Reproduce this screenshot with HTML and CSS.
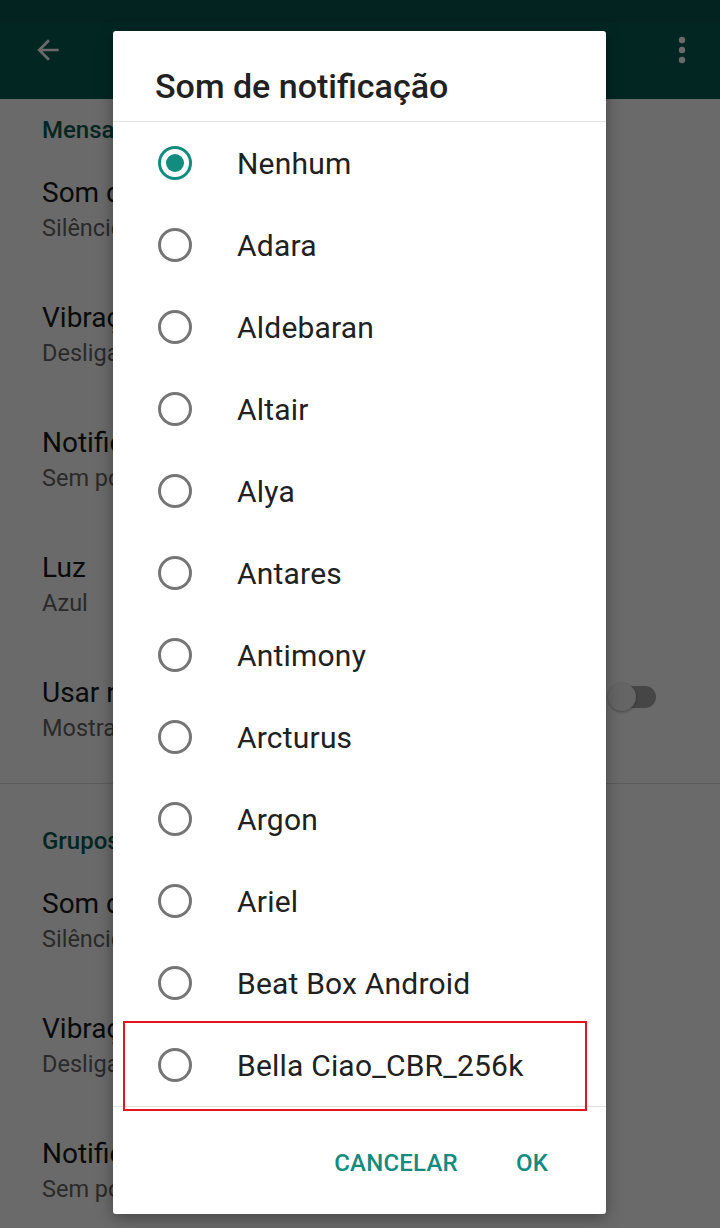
FILE: index.html
```html
<!DOCTYPE html>
<html lang="pt">
<head>
<meta charset="utf-8">
<link rel="stylesheet" href="styles.css">
</head>
<body>
<div class="screen">
  <div class="statusbar"></div>
  <div class="toolbar">
    <svg class="back" width="32" height="32" viewBox="0 0 24 24"><path d="M20 11H7.83l5.59-5.59L12 4l-8 8 8 8 1.41-1.41L7.83 13H20v-2z" fill="#fff"/></svg>
    <div class="spacer"></div>
    <svg class="more" width="10" height="32" viewBox="0 0 10 32"><circle cx="5" cy="6" r="3.2" fill="#fff"/><circle cx="5" cy="16" r="3.2" fill="#fff"/><circle cx="5" cy="26" r="3.2" fill="#fff"/></svg>
  </div>

  <div class="section">
    <div class="sec-head first"><span class="clip">Mensagens</span></div>
    <div class="row"><div class="r-title clip">Som de notificação</div><div class="r-sub clip">Silêncio</div></div>
    <div class="row"><div class="r-title clip">Vibração</div><div class="r-sub clip">Desligado</div></div>
    <div class="row"><div class="r-title clip">Notificações pop-up</div><div class="r-sub clip">Sem pop-up</div></div>
    <div class="row"><div class="r-title clip">Luz</div><div class="r-sub clip">Azul</div></div>
    <div class="row with-switch">
      <div class="row-text"><div class="r-title clip">Usar notificações de alta prioridade</div><div class="r-sub clip">Mostrar prévias</div></div>
      <div class="switch"><span class="track"></span><span class="thumb"></span></div>
    </div>
  </div>
  <div class="divider"></div>
  <div class="section">
    <div class="sec-head"><span class="clip">Grupos</span></div>
    <div class="row"><div class="r-title clip">Som de notificação</div><div class="r-sub clip">Silêncio</div></div>
    <div class="row"><div class="r-title clip">Vibração</div><div class="r-sub clip">Desligado</div></div>
    <div class="row"><div class="r-title clip">Notificações pop-up</div><div class="r-sub clip">Sem pop-up</div></div>
  </div>

  <div class="scrim"></div>

  <div class="dialog">
    <div class="d-title">Som de notificação</div>
    <div class="d-list">
      <div class="opt"><span class="radio on"></span><span class="opt-label">Nenhum</span></div>
      <div class="opt"><span class="radio"></span><span class="opt-label">Adara</span></div>
      <div class="opt"><span class="radio"></span><span class="opt-label">Aldebaran</span></div>
      <div class="opt"><span class="radio"></span><span class="opt-label">Altair</span></div>
      <div class="opt"><span class="radio"></span><span class="opt-label">Alya</span></div>
      <div class="opt"><span class="radio"></span><span class="opt-label">Antares</span></div>
      <div class="opt"><span class="radio"></span><span class="opt-label">Antimony</span></div>
      <div class="opt"><span class="radio"></span><span class="opt-label">Arcturus</span></div>
      <div class="opt"><span class="radio"></span><span class="opt-label">Argon</span></div>
      <div class="opt"><span class="radio"></span><span class="opt-label">Ariel</span></div>
      <div class="opt"><span class="radio"></span><span class="opt-label">Beat Box Android</span></div>
      <div class="opt"><span class="radio"></span><span class="opt-label">Bella Ciao_CBR_256k</span></div>
    </div>
    <div class="d-actions">
      <span class="btn">CANCELAR</span>
      <span class="btn">OK</span>
    </div>
    <div class="highlight"></div>
  </div>
</div>
</body>
</html>
```

FILE: styles.css
```css
* { box-sizing: border-box; }
html, body { margin: 0; padding: 0; }
body {
  width: 720px;
  height: 1228px;
  overflow: hidden;
  font-family: Roboto, "Noto Sans", sans-serif;
  background: #fff;
}
.screen {
  position: relative;
  width: 720px;
  height: 1228px;
  overflow: hidden;
  background: #fff;
}
.statusbar {
  height: 22px;
  background: #06544b;
}
.toolbar {
  height: 77px;
  background: #075e54;
  display: flex;
  align-items: center;
  padding: 0 33px 0 32px;
}
.toolbar .back { margin-top: -22px; }
.toolbar .spacer { flex: 1; }
.toolbar .more { margin-top: -22px; }

.section { padding: 0 0 0 42px; }
.clip {
  display: block;
  width: 71px;
  overflow: hidden;
  white-space: nowrap;
}
.sec-head {
  color: #075e54;
  font-size: 24px;
  font-weight: 500;
  line-height: 26px;
  padding-top: 44px;
}
.sec-head.first { padding-top: 18px; }
.row {
  height: 125px;
  padding-top: 33px;
}
.r-title {
  color: #1a1a1a;
  font-size: 28px;
  line-height: 34px;
}
.r-sub {
  color: #666;
  font-size: 23.5px;
  line-height: 36px;
}
.with-switch {
  display: flex;
  align-items: flex-start;
  justify-content: space-between;
  padding-right: 62px;
}
.switch {
  position: relative;
  width: 50px;
  height: 28px;
  margin-top: 6px;
}
.switch .track {
  position: absolute;
  left: 8px;
  top: 4px;
  width: 40px;
  height: 22px;
  border-radius: 11px;
  background: #a8a8a8;
}
.switch .thumb {
  position: absolute;
  left: 0;
  top: 1px;
  width: 28px;
  height: 28px;
  border-radius: 50%;
  background: #f4f4f4;
  box-shadow: 0 1px 3px rgba(0,0,0,.35);
}
.divider {
  height: 1px;
  background: #dcdcdc;
  margin-top: 15px;
}

.scrim {
  position: absolute;
  inset: 0;
  background: rgba(0,0,0,.585);
}

.dialog {
  position: absolute;
  left: 113px;
  top: 31px;
  width: 493px;
  height: 1183px;
  background: #fff;
  border-radius: 3px;
  display: flex;
  flex-direction: column;
  box-shadow: 0 4px 16px rgba(0,0,0,.35);
}
.d-title {
  height: 91px;
  padding: 35px 0 0 42px;
  font-size: 34px;
  line-height: 40px;
  font-weight: 500;
  color: #212121;
  border-bottom: 1px solid #e2e2e2;
}
.d-list {
  display: flex;
  flex-direction: column;
  border-bottom: 1px solid #e2e2e2;
}
.opt {
  height: 82px;
  display: flex;
  align-items: center;
  padding-left: 45px;
}
.radio {
  width: 34px;
  height: 34px;
  border-radius: 50%;
  border: 3px solid #757575;
  position: relative;
  flex: none;
}
.radio.on { border-color: #128c7e; }
.radio.on::after {
  content: "";
  position: absolute;
  left: 5px;
  top: 5px;
  width: 18px;
  height: 18px;
  border-radius: 50%;
  background: #128c7e;
}
.opt-label {
  margin-left: 45px;
  font-size: 30px;
  letter-spacing: 0.2px;
  color: #212121;
}
.d-actions {
  flex: 1;
  display: flex;
  justify-content: flex-end;
  align-items: center;
  gap: 58px;
  padding: 4px 58px 0 0;
}
.btn {
  color: #128c7e;
  font-weight: 500;
  font-size: 24px;
  letter-spacing: 0.2px;
}
.highlight {
  position: absolute;
  left: 10px;
  top: 990px;
  width: 464px;
  height: 90px;
  border: 2px solid #e8141e;
}
```
